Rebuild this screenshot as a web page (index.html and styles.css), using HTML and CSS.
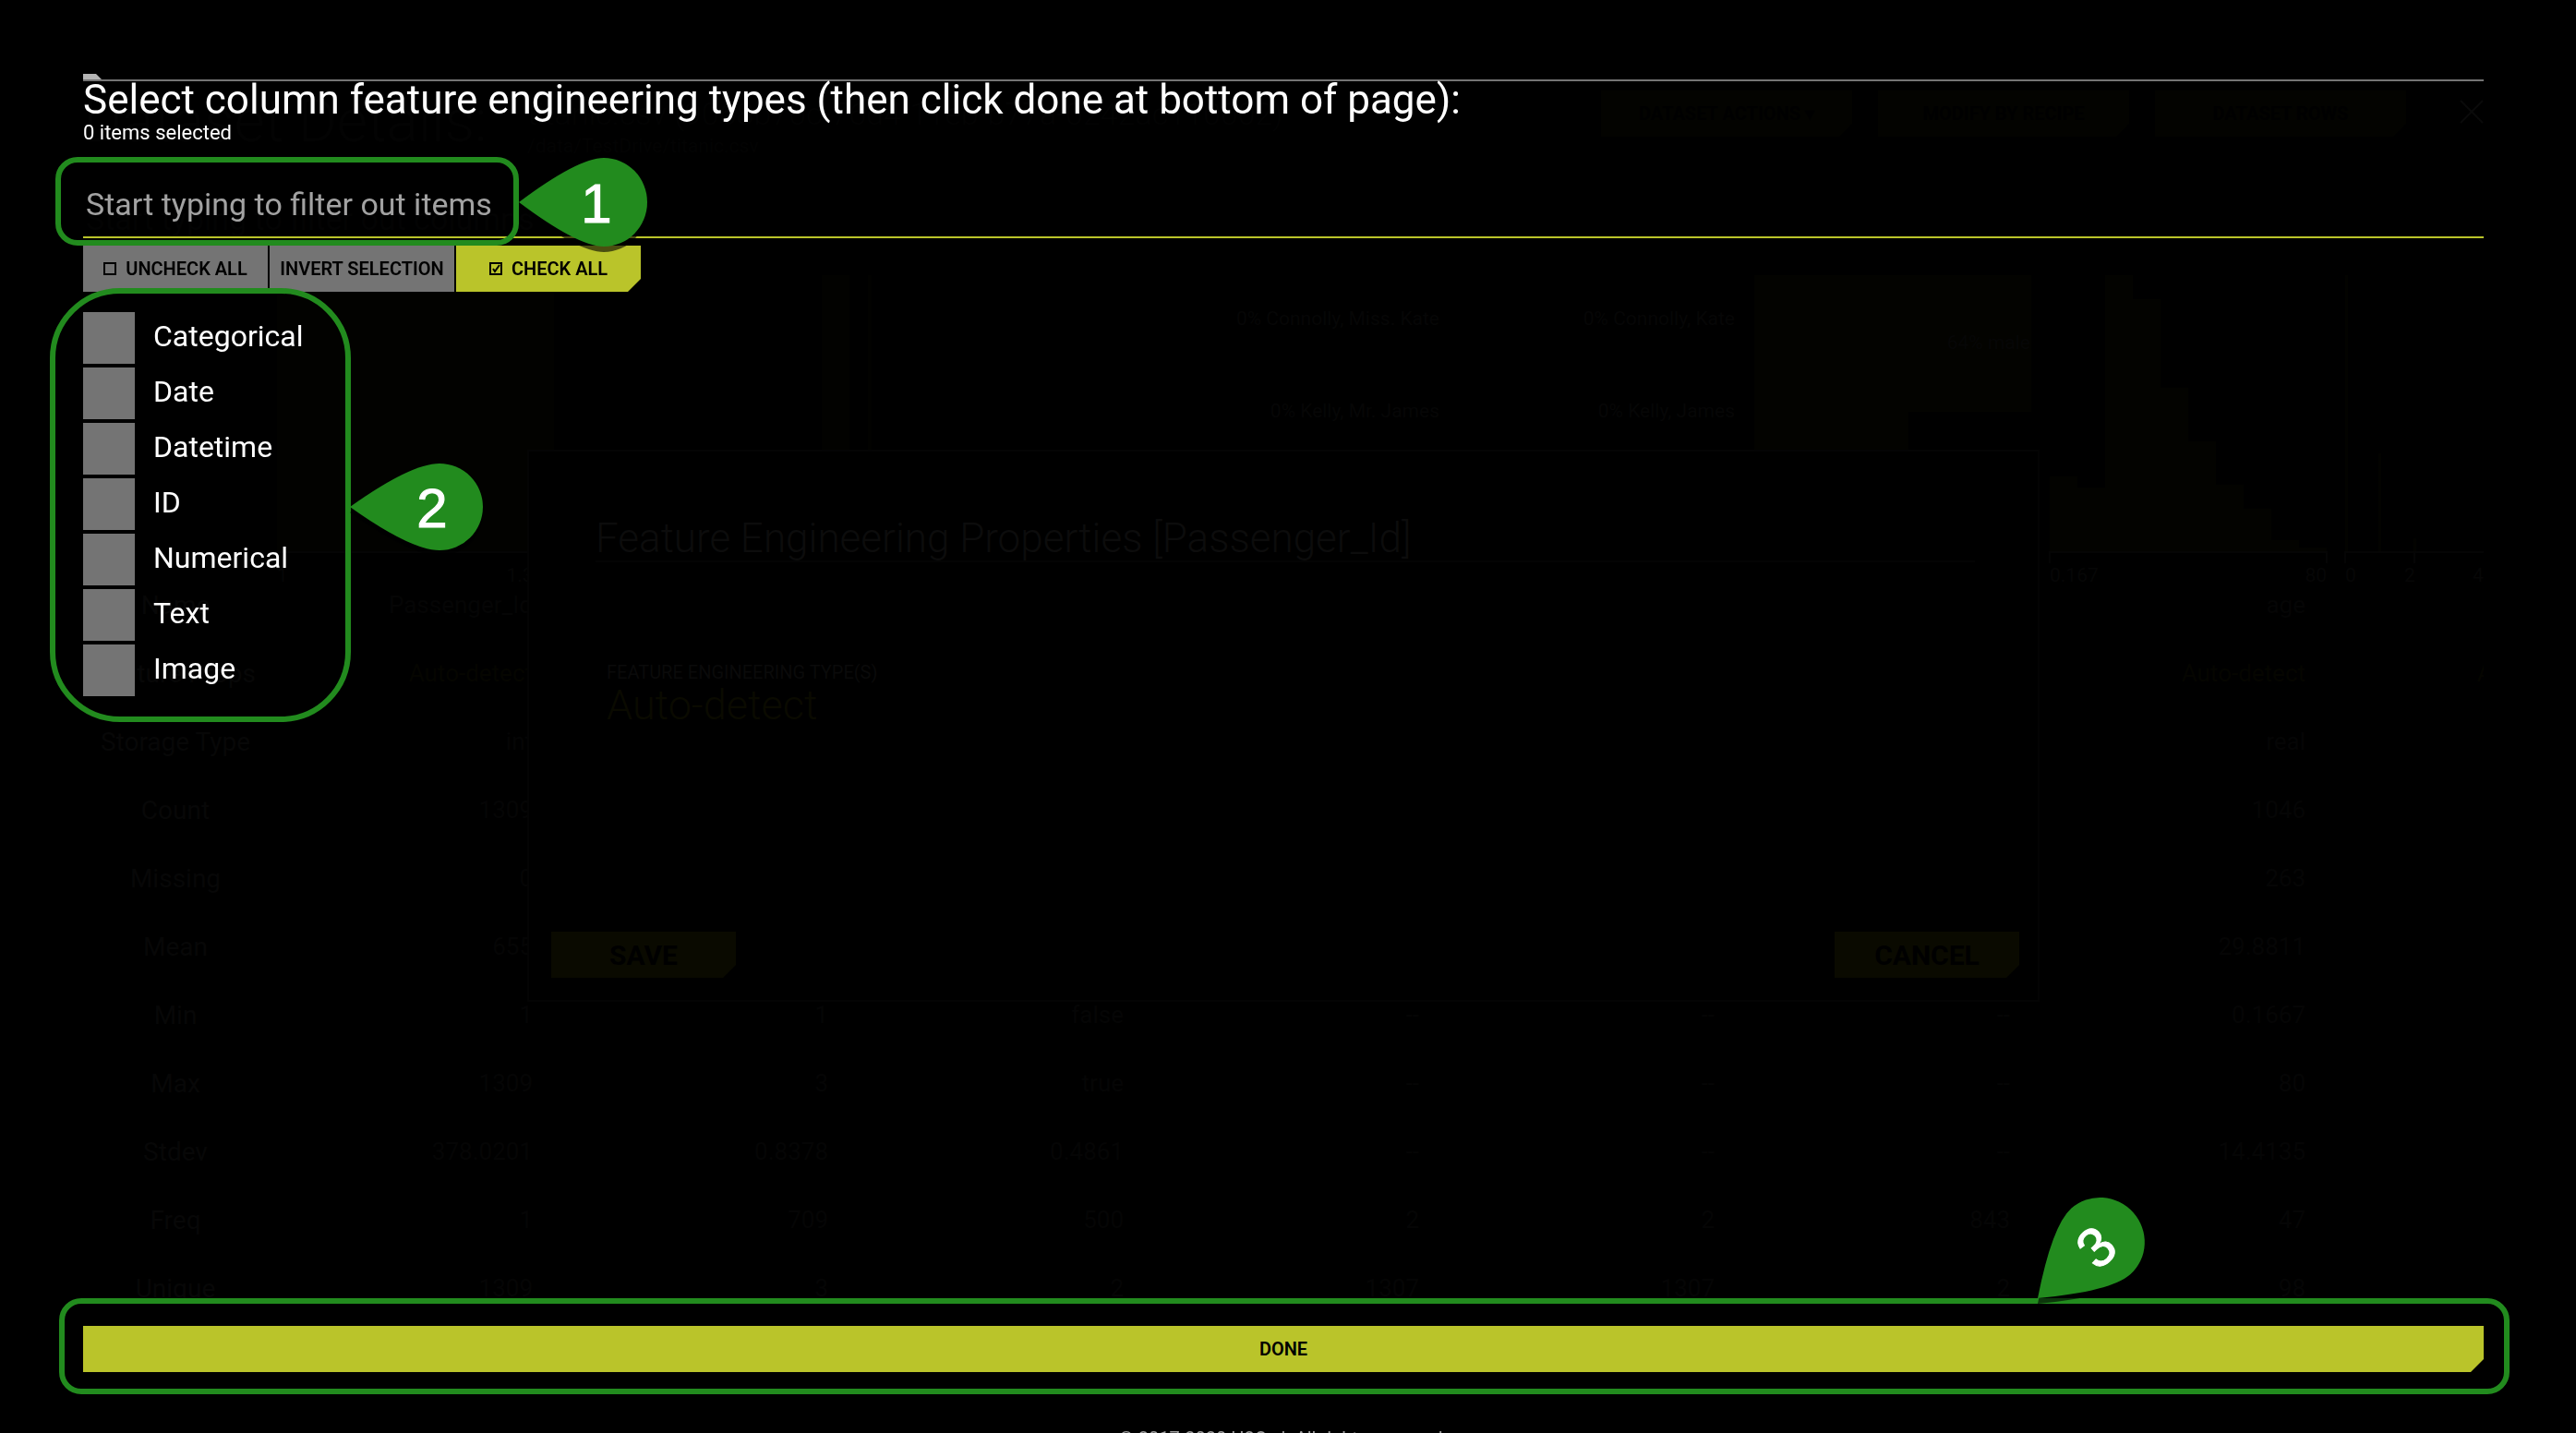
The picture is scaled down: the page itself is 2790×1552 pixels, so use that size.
FILE: index.html
```html
<!DOCTYPE html>
<html lang="en">
<head>
<meta charset="utf-8">
<title>Select column feature engineering types</title>
<link rel="stylesheet" href="styles.css">
</head>
<body>
<main class="page">
  <header class="page-head">
    <h1 class="page-title">Dataset Details:</h1>
    <div class="page-file">
      <p class="file-name">titanic.csv (9068b70c-76d4-11eb-b77a-0242ac110002)</p>
      <p class="file-path">/data/TestDrive/titanic.csv</p>
    </div>
    <div class="page-actions">
      <button class="ghost" type="button">DATASET ACTIONS ▾</button>
      <button class="ghost" type="button">MODIFY BY RECIPE</button>
      <button class="ghost" type="button">DATASET ROWS</button>
      <button class="close" type="button" aria-label="Close"><svg width="26" height="26" viewBox="0 0 26 26"><path d="M1 1L25 25M25 1L1 25"/></svg></button>
    </div>
  </header>
  <input class="page-filter" type="text" aria-label="Filter columns" placeholder="Start typing to filter out columns">
  <div class="table-clip">
    <table class="stats">
      <colgroup><col class="col-label"><col><col><col><col><col><col><col><col></colgroup>
      <thead>
        <tr class="charts">
          <th></th>
          <td><svg class="chart faint" viewBox="0 0 300 320"><path class="bars" d="M0 0h300v300H0z"/><path class="axis" d="M0 312v-12h300v12"/><text x="0" y="332">1</text><text x="300" y="332" text-anchor="end">1.31k</text></svg></td>
          <td><svg class="chart faint" viewBox="0 0 300 320"><path class="bars" d="M270 0h30v300h-30z"/></svg></td>
          <td><svg class="chart faint" viewBox="0 0 300 320"><path class="bars" d="M0 0h4v300H0z"/></svg></td>
          <td><svg class="chart" viewBox="0 0 300 320"><text x="299" y="54" text-anchor="end">0% Connolly, Miss. Kate</text><text x="299" y="154" text-anchor="end">0% Kelly, Mr. James</text></svg></td>
          <td><svg class="chart" viewBox="0 0 300 320"><text x="299" y="54" text-anchor="end">0% Connolly, Kate</text><text x="299" y="154" text-anchor="end">0% Kelly, James</text></svg></td>
          <td><svg class="chart" viewBox="0 0 300 320"><path class="bars" d="M0 0h300v148H167v152H0z"/><text x="299" y="80" text-anchor="end">64% male</text></svg></td>
          <td><svg class="chart" viewBox="0 0 300 320"><path class="bars" d="M0 300V218h30v12h30V0h30v26h30v96h30v58h30v47h30v26h30v34h30v8h30v5z"/><path class="axis" d="M0 312v-12h300v12"/><text x="0" y="332">0.167</text><text x="300" y="332" text-anchor="end">80</text></svg></td>
          <td><svg class="chart" viewBox="0 0 300 320"><path class="bars" d="M0 0h3v300H0zM36 193h3v107h-3zM74 285h3v15h-3z"/><path class="axis" d="M0 312v-12h300v12M75 300v12"/><text x="0" y="332">0</text><text x="64" y="332">2</text><text x="138" y="332">4</text></svg></td>
        </tr>
      </thead>
      <tbody>
        <tr><th scope="row">Name</th><td>Passenger_Id</td><td>pclass</td><td>survived</td><td>name_with_salutations</td><td>name</td><td>sex</td><td>age</td><td></td></tr>
        <tr><th scope="row">Feature Props</th><td class="auto">Auto-detect</td><td class="auto">Auto-detect</td><td class="auto">Auto-detect</td><td class="auto">Auto-detect</td><td class="auto">Auto-detect</td><td class="auto">Auto-detect</td><td class="auto">Auto-detect</td><td class="auto">Auto-detect</td></tr>
        <tr><th scope="row">Storage Type</th><td>int</td><td>int</td><td>bool</td><td>str</td><td>str</td><td>str</td><td>real</td><td></td></tr>
        <tr><th scope="row">Count</th><td>1309</td><td>1309</td><td>1309</td><td>1309</td><td>1309</td><td>1309</td><td>1046</td><td></td></tr>
        <tr><th scope="row">Missing</th><td>0</td><td>0</td><td>0</td><td>0</td><td>0</td><td>0</td><td>263</td><td></td></tr>
        <tr><th scope="row">Mean</th><td>655</td><td>2.2949</td><td>0.382</td><td>--</td><td>--</td><td>--</td><td>29.8811</td><td></td></tr>
        <tr><th scope="row">Min</th><td>1</td><td>1</td><td>false</td><td>--</td><td>--</td><td>--</td><td>0.1667</td><td></td></tr>
        <tr><th scope="row">Max</th><td>1309</td><td>3</td><td>true</td><td>--</td><td>--</td><td>--</td><td>80</td><td></td></tr>
        <tr><th scope="row">Stdev</th><td>378.0201</td><td>0.8378</td><td>0.4861</td><td>--</td><td>--</td><td>--</td><td>14.4135</td><td></td></tr>
        <tr><th scope="row">Freq</th><td>1</td><td>709</td><td>500</td><td>2</td><td>2</td><td>843</td><td>47</td><td></td></tr>
        <tr><th scope="row">Unique</th><td>1309</td><td>3</td><td>2</td><td>1307</td><td>1307</td><td>2</td><td>98</td><td></td></tr>
      </tbody>
    </table>
  </div>
</main>

<section class="props">
  <h2 class="props-title">Feature Engineering Properties [Passenger_Id]</h2>
  <div class="props-body">
    <p class="props-label">FEATURE ENGINEERING TYPE(S)</p>
    <p class="props-value">Auto-detect</p>
  </div>
  <div class="props-actions">
    <button class="dim" type="button">SAVE</button>
    <button class="dim" type="button">CANCEL</button>
  </div>
</section>

<section class="picker">
  <svg class="tab" width="20" height="6" viewBox="0 0 20 6"><path d="M0 0h14l6 6H0z"/></svg>
  <h2 class="picker-title">Select column feature engineering types (then click done at bottom of page):</h2>
  <p class="picker-count">0 items selected</p>
  <div class="filter">
    <input class="filter-input" type="text" aria-label="Filter items" placeholder="Start typing to filter out items">
    <div class="mark mark-filter"></div>
    <svg class="pin pin-1" width="140" height="98" viewBox="0 0 140 98"><path d="M0 49Q64 1 92 1A47 48 0 0 1 92 97Q64 97 0 49z"/><text x="84" y="71">1</text></svg>
  </div>
  <div class="bulk">
    <button class="bulk-btn" type="button"><svg width="14" height="14" viewBox="0 0 14 14"><path d="M1 1h12v12H1z"/></svg>UNCHECK ALL</button>
    <button class="bulk-btn" type="button">INVERT SELECTION</button>
    <button class="bulk-btn primary" type="button"><svg width="14" height="14" viewBox="0 0 14 14"><path d="M1 1h12v12H1zM4 7l2 3 5-7"/></svg>CHECK ALL</button>
  </div>
  <div class="options">
    <label class="option"><input type="checkbox"><span>Categorical</span></label>
    <label class="option"><input type="checkbox"><span>Date</span></label>
    <label class="option"><input type="checkbox"><span>Datetime</span></label>
    <label class="option"><input type="checkbox"><span>ID</span></label>
    <label class="option"><input type="checkbox"><span>Numerical</span></label>
    <label class="option"><input type="checkbox"><span>Text</span></label>
    <label class="option"><input type="checkbox"><span>Image</span></label>
    <div class="mark mark-options"></div>
    <svg class="pin pin-2" width="146" height="96" viewBox="0 0 146 96"><path d="M0 48Q66 1 97 1A47 47 0 0 1 97 95Q66 95 0 48z"/><text x="89" y="70">2</text></svg>
  </div>
  <div class="finish">
    <button class="done" type="button">DONE</button>
    <div class="mark mark-done"></div>
    <svg class="pin pin-3" width="140" height="98" viewBox="0 0 140 98"><g transform="rotate(-42 0 49)"><path d="M0 49Q64 1 92 1A47 48 0 0 1 92 97Q64 97 0 49z"/><text x="84" y="71">3</text></g></svg>
  </div>
  <footer class="legal">© 2017-2020 H2O.ai. All rights reserved.</footer>
</section>
</body>
</html>
```
FILE: styles.css
```css
:root {
  --accent: #bac42a;
  --grey: #747474;
  --mark: #228b1e;
}

* { box-sizing: border-box; }

body {
  margin: 0;
  background: #000;
  color: #fff;
  font-family: Roboto, "Liberation Sans", sans-serif;
  overflow: hidden;
}

h1, h2, p { margin: 0; font-weight: 400; }

button, input { font: inherit; border: 0; padding: 0; border-radius: 0; }

/* Dataset page, dimmed under the two layers */
.page { color: #050505; padding: 98px 100px 0 90px; height: 100vh; overflow: hidden; }
.page-head { display: flex; height: 88px; }
.page-title { font-size: 64px; line-height: 68px; font-weight: 300; width: 481px; white-space: nowrap; color: #030303; }
.page-file { flex: 1; color: #030303; }
.file-name { font-size: 34px; line-height: 50px; font-weight: 300; white-space: nowrap; }
.file-path { font-size: 21px; line-height: 20px; }
.page-actions { display: flex; gap: 28px; height: 50px; }
.ghost {
  width: 272px;
  font-size: 20px;
  font-weight: 700;
  background: #030300;
  color: #000;
  clip-path: polygon(0 0, 100% 0, 100% calc(100% - 14px), calc(100% - 14px) 100%, 0 100%);
}
.close { width: 56px; background: none; text-align: right; }
.close path { stroke: #0a0a0a; stroke-width: 2; fill: none; }
.page-filter { display: block; width: 100%; height: 74px; margin-top: 14px; background: none; font-size: 34px; padding-left: 3px; }
.page-filter::placeholder { color: #030303; opacity: 1; }
.table-clip { margin-top: 24px; overflow: hidden; }
.stats { width: 2760px; table-layout: fixed; border-collapse: collapse; font-size: 26px; }
.col-label { width: 200px; }
.stats th { padding: 0; font-size: 28px; font-weight: 400; text-align: center; white-space: nowrap; color: #070707; }
.stats td { padding: 0 33px 0 0; height: 74px; text-align: right; }
.stats .auto { color: #050500; }
.stats .charts td { height: 320px; padding: 0 10px; }
.chart { display: block; width: 300px; height: 320px; overflow: visible; }
.chart text { fill: #060606; font-size: 21px; }
.bars { fill: #030300; }
.faint .bars { fill: #020200; }
.axis { fill: none; stroke: #050505; stroke-width: 2; }

/* Column properties dialog */
.props {
  position: fixed;
  top: 487px;
  left: 571px;
  right: 581px;
  padding: 70px 20px 24px 24px;
  background: #000;
  border: 2px solid #040404;
}
.props-title { margin: 0 48px; color: #0c0c0c; font-size: 44px; line-height: 48px; font-weight: 300; border-bottom: 2px solid #040404; }
.props-body { margin: 104px 60px 0; height: 296px; }
.props-label { font-size: 20px; line-height: 30px; color: #0a0a0a; }
.props-value { font-size: 45px; line-height: 42px; font-weight: 300; color: #0a0a00; }
.props-actions { display: flex; justify-content: space-between; }
.dim {
  width: 200px;
  height: 50px;
  font-size: 30px;
  font-weight: 700;
  color: #000;
  background: #0a0a00;
  clip-path: polygon(0 0, 100% 0, 100% calc(100% - 14px), calc(100% - 14px) 100%, 0 100%);
}

/* Type picker */
.picker {
  position: fixed;
  inset: 0;
  display: flex;
  flex-direction: column;
  padding: 80px 100px 0 90px;
  overflow: hidden;
}
.tab { display: block; fill: #b4b4b4; flex: none; }
.picker-title { border-top: 2px solid var(--grey); font-size: 44px; line-height: 40px; white-space: nowrap; }
.picker-count { font-size: 22px; line-height: 32px; }
.filter { position: relative; margin-top: 26px; }
.filter-input {
  display: block;
  width: 100%;
  height: 72px;
  padding-left: 3px;
  background: none;
  color: #fff;
  font-size: 34px;
  border-bottom: 2px solid var(--accent);
}
.filter-input::placeholder { color: #a2a2a2; opacity: 1; }

.bulk { display: flex; gap: 2px; margin-top: 8px; }
.bulk-btn {
  display: flex;
  align-items: center;
  justify-content: center;
  gap: 10px;
  width: 200px;
  height: 50px;
  background: var(--grey);
  color: #000;
  font-size: 20px;
  font-weight: 600;
  white-space: nowrap;
}
.bulk-btn svg { fill: none; stroke: #000; stroke-width: 2; }
.primary, .done {
  background: var(--accent);
  clip-path: polygon(0 0, 100% 0, 100% calc(100% - 14px), calc(100% - 14px) 100%, 0 100%);
}

.options { position: relative; display: flex; flex-direction: column; align-items: flex-start; gap: 4px; margin-top: 22px; }
.option { display: flex; gap: 20px; height: 56px; font-size: 32px; line-height: 52px; }
.option input { appearance: none; width: 56px; height: 56px; margin: 0; background: var(--grey); }

.finish { position: relative; margin-top: auto; }
.done { display: block; width: 100%; height: 50px; color: #000; font-size: 20px; font-weight: 600; }
.legal { height: 6px; margin-top: 60px; text-align: center; font-size: 20px; line-height: 24px; color: #a0a0a0; }

/* Numbered guide marks laid over the picker */
.mark { position: absolute; border: 6px solid var(--mark); border-radius: 24px; pointer-events: none; }
.mark-filter { left: -30px; top: -16px; width: 502px; height: 96px; }
.mark-options { left: -36px; top: -26px; width: 326px; height: 470px; border-radius: 76px; }
.mark-done { left: -26px; right: -28px; top: -30px; height: 104px; }
.pin { position: absolute; overflow: visible; fill: var(--mark); filter: drop-shadow(0 6px 0 rgb(0 0 0 / 60%)); z-index: 1; }
.pin text { fill: #fff; stroke: #fff; stroke-width: 1; font-family: "Liberation Sans", sans-serif; font-size: 60px; text-anchor: middle; }
.pin-1 { left: 472px; top: -16px; }
.pin-2 { left: 289px; top: 163px; }
.pin-3 { right: 343px; top: -79px; }
```
